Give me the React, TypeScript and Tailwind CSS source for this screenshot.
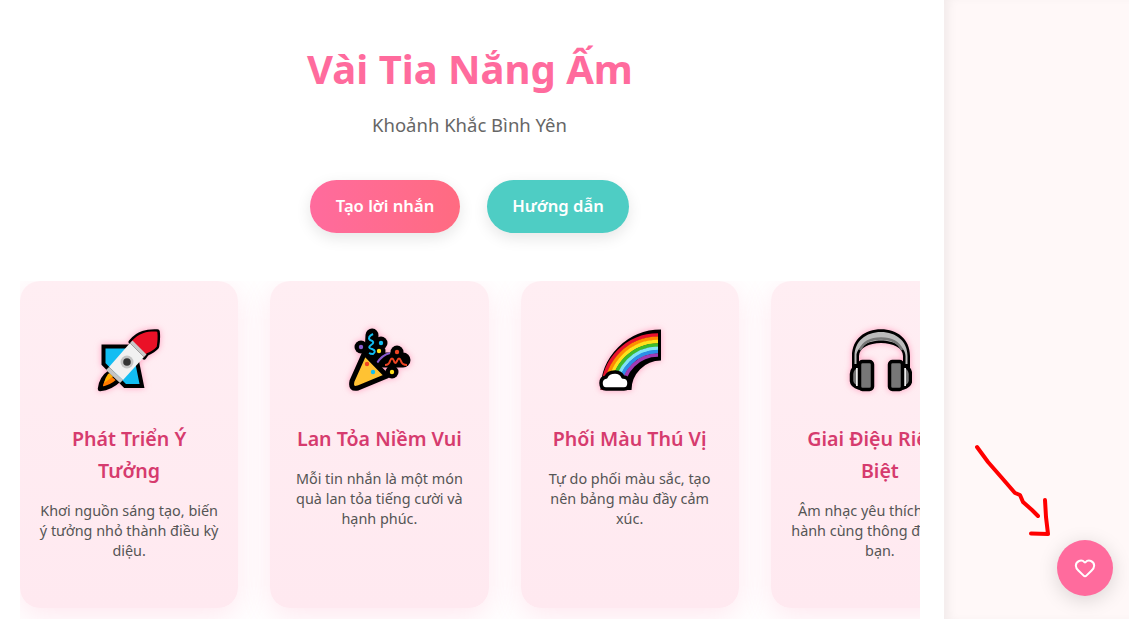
import React from "react";
import { Heart } from "lucide-react";

const glow = "h-16 w-16 drop-shadow-[0_0_3px_rgba(255,107,157,0.6)]";
const nose = "M34 14 C38 9 42 6.500 46 5.300 C51 3.500 56 3.500 60.300 3.700 C61 9 60.500 14 59.700 18.700 C57 22 53 24 49.700 25.300 L47 29 Z";

function Rocket() {
  return (
    <svg viewBox="0 0 64 64" className={glow}>
      <path d="M13 44 Q4 50 3 61 Q14 60 22 52 Z" fill="#ff7a00" stroke="#000" strokeWidth="4.500" strokeLinejoin="round" />
      <path d="M11 46 Q8 50 7 55 L18 47 L15 44 Z" fill="#ffb000" />
      <path d="M6.500 18.500 H37 L45 58 H28 L6.500 36 Z" fill="#12bdf2" stroke="#000" strokeWidth="4" strokeLinejoin="miter" />
      <path d={nose} fill="#ea1127" stroke="#000" strokeWidth="5" strokeLinejoin="round" />
      <path d={nose} fill="#ea1127" />
      <path d="M33 15 L47 29 L26 52 L12 39 Z" fill="#f1f1f1" />
      <path d="M33 15 L35.500 12.500 L49.500 26.500 L47 29 Z" fill="#c9c9c9" />
      <path d="M12 39 L26 52 L23 55 L9 42 Z" fill="#c4c4c4" />
      <circle cx="30" cy="34" r="6.500" fill="#c4c4c4" />
      <circle cx="30" cy="34" r="3.800" fill="#333" />
    </svg>
  );
}

function Party() {
  return (
    <svg viewBox="0 0 64 64" fill="none" className={glow}>
      <g fill="#000">
        <circle cx="14" cy="19" r="6.500" />
        <circle cx="34" cy="15" r="6.500" />
        <circle cx="32" cy="23" r="6.500" />
        <circle cx="50" cy="24" r="6.500" />
        <circle cx="45" cy="44" r="6.500" />
      </g>
      <path d="M25 7 L24 26" stroke="#000" strokeWidth="13" strokeLinecap="round" />
      <path d="M32 32 H56" stroke="#000" strokeWidth="15" strokeLinecap="round" />
      <path d="M30 35 Q35 27 43 25" stroke="#8a5cd0" strokeWidth="2" />
      <path d="M26 6 Q20 9 23 12 Q29 14 24 17 Q20 20 25 21 Q30 23 26 26 Q23 26 22 25" stroke="#12bdf2" strokeWidth="2" />
      <path d="M38 37 Q42 37 43 33 Q45 28 47 33 Q48 37 50 33 Q52 28 54 33 Q55 37 60 37" stroke="#ef4423" strokeWidth="2" />
      <path d="M17.500 25 L40 48 L11 60 Q3 62 5 53 Z" fill="#ffc233" stroke="#000" strokeWidth="5" strokeLinejoin="round" />
      <circle cx="14" cy="19" r="2.200" fill="#8a5cd0" />
      <circle cx="34" cy="15" r="2.200" fill="#12bdf2" />
      <circle cx="32" cy="23" r="2.200" fill="#ffe01b" />
      <circle cx="50" cy="24" r="2.200" fill="#ef4423" />
      <circle cx="45" cy="44" r="2.200" fill="#ffe01b" />
      <circle cx="20" cy="36" r="2.200" fill="#ef4423" />
      <circle cx="26" cy="44" r="2.200" fill="#12bdf2" />
    </svg>
  );
}

function Rainbow() {
  const bands = [
    ["#e8112d", 55],
    ["#ff8c00", 51.7],
    ["#ffe01b", 48.4],
    ["#3dbb2b", 45],
    ["#7fe3f5", 41.7],
    ["#2b8fe8", 38.4],
    ["#a13bb3", 35],
  ] as const;
  return (
    <svg viewBox="0 0 64 64" fill="none" className={glow}>
      <path d="M63 17 A45 45 0 0 0 18 62" stroke="#000" strokeWidth="31" />
      {bands.map(([c, r]) => (
        <path key={c} d={`M60 ${62 - r} A${r} ${r} 0 0 0 ${60 - r} 62`} stroke={c} strokeWidth="3.700" />
      ))}
      <path d="M8 61 Q3 61 3 55 Q3 50 8 49 Q10 44 17 44 Q23 44 25 49 Q31 49 31 55 Q31 61 26 61 Z" fill="#fff" stroke="#000" strokeWidth="3.500" strokeLinejoin="round" />
    </svg>
  );
}

function Headphones() {
  return (
    <svg viewBox="0 0 64 64" fill="none" className={glow}>
      <path d="M4 40 V28 C4 11 17 1.300 33 1.300 C49 1.300 62 11 62 28 V40 H55 V28 C55 20 45 15 33 15 C21 15 11 20 11 28 V40 Z" fill="#000" />
      <path d="M6.500 36 V28 C6.500 13 18 4 33 4 C48 4 59.500 13 59.500 28 V36 H57.500 V28 C57.500 19 46 12.500 33 12.500 C20 12.500 8.500 19 8.500 28 V36 Z" fill="#bbb" />
      <path d="M12 22 C16 13 25 10.500 33 10.500 C41 10.500 50 13 54 22" stroke="#777" strokeWidth="2.500" />
      <path d="M11 38 Q4 39 3.500 46 V53 Q4 58 11 60 Z" fill="#777" stroke="#000" strokeWidth="3.500" strokeLinejoin="round" />
      <path d="M55 38 Q62 39 62.500 46 V53 Q62 58 55 60 Z" fill="#777" stroke="#000" strokeWidth="3.500" strokeLinejoin="round" />
      <path d="M8 40 H11 V58 H8 Z" fill="#eee" />
      <path d="M55 40 H58 V58 H55 Z" fill="#eee" />
      <rect x="11.500" y="33.500" width="13" height="28" rx="3" fill="#777" stroke="#000" strokeWidth="3.500" />
      <rect x="41.500" y="33.500" width="13" height="28" rx="3" fill="#777" stroke="#000" strokeWidth="3.500" />
    </svg>
  );
}

const cards = [
  { icon: <Rocket />, title: "Phát Triển Ý Tưởng", text: "Khơi nguồn sáng tạo, biến ý tưởng nhỏ thành điều kỳ diệu." },
  { icon: <Party />, title: "Lan Tỏa Niềm Vui", text: "Mỗi tin nhắn là một món quà lan tỏa tiếng cười và hạnh phúc." },
  { icon: <Rainbow />, title: "Phối Màu Thú Vị", text: "Tự do phối màu sắc, tạo nên bảng màu đầy cảm xúc." },
  { icon: <Headphones />, title: "Giai Điệu Riêng Biệt", text: "Âm nhạc yêu thích đồng hành cùng thông điệp của bạn." },
];

export default function App() {
  return (
    <div className="relative flex h-[619px] w-[1129px] overflow-hidden bg-white font-['Noto_Sans','Open_Sans',sans-serif]">
      <main className="w-[944px] shrink-0 pl-5 pr-6 pt-[39px]">
        <h1 className="text-center text-[40px] leading-[60px] font-bold text-[#ff6b9d]">Vài Tia Nắng Ấm</h1>
        <p className="mt-[11px] pr-px text-center text-[18.500px] leading-[30px] text-[#666]">Khoảnh Khắc Bình Yên</p>
        <div className="mt-10 flex justify-center gap-[27px] pr-px">
          <button className="h-[53px] w-[150px] rounded-full bg-gradient-to-r from-[#ff6b9d] to-[#ff6b81] text-[16.600px] font-semibold text-white shadow-[0_5px_15px_rgba(0,0,0,0.1)]">
            Tạo lời nhắn
          </button>
          <button className="h-[53px] w-[142px] rounded-full bg-[#4ecdc4] text-[16.600px] font-semibold text-white shadow-[0_5px_15px_rgba(0,0,0,0.1)]">
            Hướng dẫn
          </button>
        </div>
        <div className="mt-12 flex h-[338px] gap-8 overflow-hidden">
          {cards.map((c) => (
            <div
              key={c.title}
              className="h-[327px] w-[218.250px] shrink-0 rounded-[20px] bg-gradient-to-b from-[#ffeef3] to-[#ffe9f0] px-5 pt-[47px] text-center shadow-[0_8px_30px_rgba(255,107,157,0.16)]"
            >
              <div className="flex justify-center">{c.icon}</div>
              <h3 className="mt-[31px] text-[19.600px] leading-8 font-semibold text-[#d63b6e]">{c.title}</h3>
              <p className="-mx-[3px] mt-[14px] text-[14.400px] leading-[20.200px] text-[#555]">{c.text}</p>
            </div>
          ))}
        </div>
      </main>
      <aside className="flex-1 bg-[#fff8f8] shadow-[inset_8px_0_10px_-3px_rgba(0,0,0,0.05)]" />
      <svg className="pointer-events-none absolute inset-0 h-full w-full" viewBox="0 0 1129 619" fill="none">
        <path d="M977 447 L988 462 L1002 478 L1015 493 L1020 495 L1023 502 L1032 510 L1038 516" stroke="#ff0000" strokeWidth="4" strokeLinecap="round" strokeLinejoin="round" />
        <path d="M1045 500 L1046 517 L1048 534 L1031 533.500" stroke="#ff0000" strokeWidth="4" strokeLinecap="round" strokeLinejoin="round" />
      </svg>
      <button className="absolute right-4 bottom-[23px] flex h-14 w-14 items-center justify-center rounded-full bg-[#ff6b9d] text-white shadow-[0_4px_20px_rgba(0,0,0,0.15)]">
        <Heart size={22} strokeWidth={2.200} />
      </button>
    </div>
  );
}
